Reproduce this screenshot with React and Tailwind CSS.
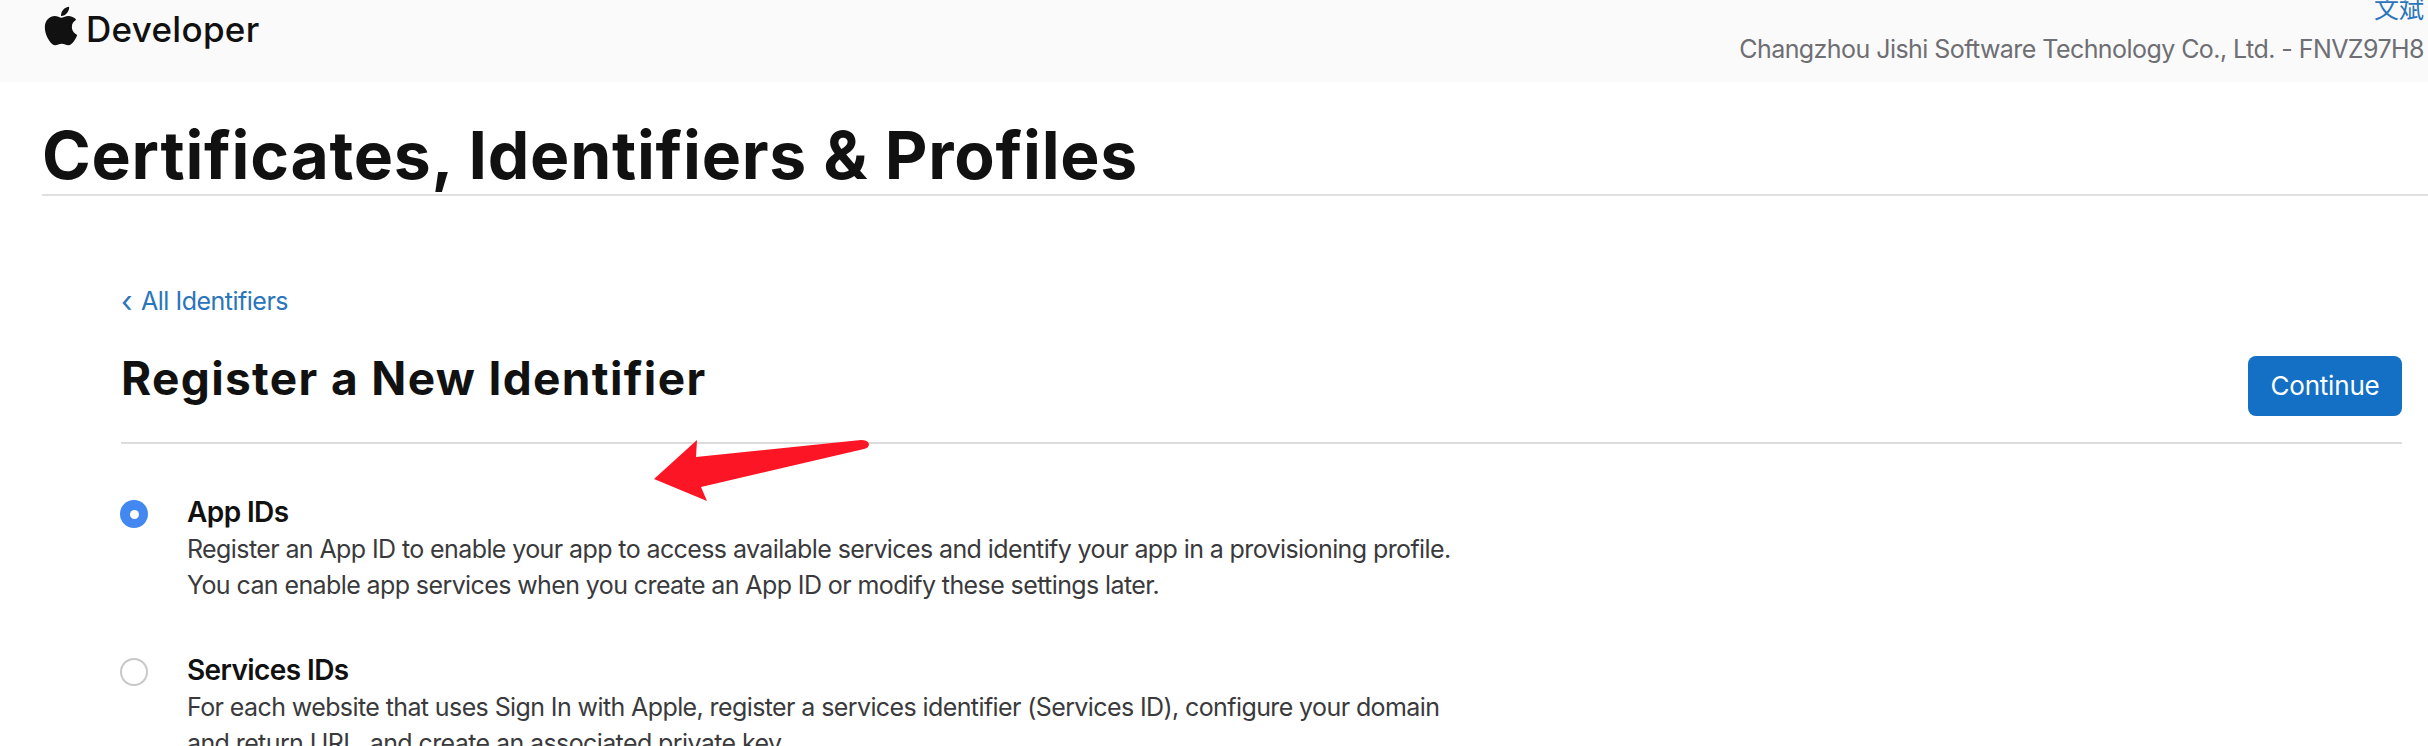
import { FaApple } from 'react-icons/fa';

const identifierTypes = [
  {
    name: 'App IDs',
    checked: true,
    lines: [
      'Register an App ID to enable your app to access available services and identify your app in a provisioning profile.',
      'You can enable app services when you create an App ID or modify these settings later.',
    ],
  },
  {
    name: 'Services IDs',
    checked: false,
    lines: [
      'For each website that uses Sign In with Apple, register a services identifier (Services ID), configure your domain',
      'and return URL, and create an associated private key.',
    ],
  },
];

function RadioRow({ item }) {
  return (
    <div className="flex items-start">
      <div
        className={
          item.checked
            ? 'mt-[4px] flex h-[28px] w-[28px] shrink-0 items-center justify-center rounded-full bg-[#4288f0]'
            : 'mt-[4px] h-[28px] w-[28px] shrink-0 rounded-full border-2 border-[#c8c8c8] bg-white'
        }
      >
        {item.checked && <div className="h-[9px] w-[9px] rounded-full bg-white" />}
      </div>
      <div className="ml-[39px]">
        <div className="text-[28px] leading-[32px] font-semibold tracking-[-0.6px] text-[#111111]">{item.name}</div>
        <div className="mt-[3px] text-[25px] leading-[36px] tracking-[-0.6px] text-[#3a3a3c]">
          {item.lines.map((line) => (
            <div key={line} className="whitespace-nowrap">{line}</div>
          ))}
        </div>
      </div>
    </div>
  );
}

export default function App() {
  return (
    <div className="relative h-[746px] w-[2428px] overflow-hidden bg-white font-['Inter','Noto_Sans_CJK_SC',sans-serif]">
      {/* Top bar */}
      <header className="flex h-[82px] items-start justify-between overflow-hidden bg-[#fafafa] pr-[4px] pl-[42px]">
        <div className="flex items-center">
          <FaApple className="-mt-[2px] h-[44px] w-[38px] text-[#111111]" />
          <span className="mt-[4px] ml-[6px] text-[35px] leading-[50px] font-medium tracking-[0.3px] text-[#111111]">Developer</span>
        </div>
        <div className="-mt-[7px] flex flex-col items-end">
          <a className="text-[25px] leading-[32px] text-[#2a75bb]">文斌</a>
          <span className="mt-[8px] text-[25px] leading-[32px] tracking-[-0.56px] text-[#6e6e73]">
            Changzhou Jishi Software Technology Co., Ltd. - FNVZ97H8
          </span>
        </div>
      </header>

      {/* Page title */}
      <div className="ml-[42px] h-[114px] border-b-2 border-[#e0e0e0]">
        <h1 className="pt-[37px] text-[66px] leading-[72px] font-bold tracking-[0.73px] text-[#111111]">
          Certificates, Identifiers &amp; Profiles
        </h1>
      </div>

      {/* Content */}
      <main className="mr-[26px] ml-[120px] pt-[89px]">
        <div className="ml-[1px] flex items-center text-[25px] leading-[32px] tracking-[-0.5px] text-[#2a75bb]">
          <span className="mr-[9px] text-[30px]">‹</span>
          <span>All Identifiers</span>
        </div>
        <div className="ml-[1px] flex h-[127px] items-start justify-between border-b-2 border-[#dcdcdc]">
          <h2 className="mt-[33px] text-[46px] leading-[56px] font-bold tracking-[1.35px] text-[#111111]">Register a New Identifier</h2>
          <button className="mt-[39px] h-[60px] w-[154px] rounded-[8px] bg-[#1470c4] pb-[2px] text-[26px] tracking-[-0.2px] text-white">Continue</button>
        </div>
        <div className="mt-[52px] flex flex-col gap-[51px]">
          {identifierTypes.map((item) => (
            <RadioRow key={item.name} item={item} />
          ))}
        </div>
      </main>

      {/* Red annotation arrow */}
      <svg className="absolute top-0 left-0" width="2428" height="746" viewBox="0 0 2428 746">
        <path
          d="M654 479 L697 440 L696 457 L861 440 Q868 440 869 444 Q869 448 864 449 L701 487 L707 501 Z"
          fill="#fc1524"
        />
      </svg>
    </div>
  );
}
